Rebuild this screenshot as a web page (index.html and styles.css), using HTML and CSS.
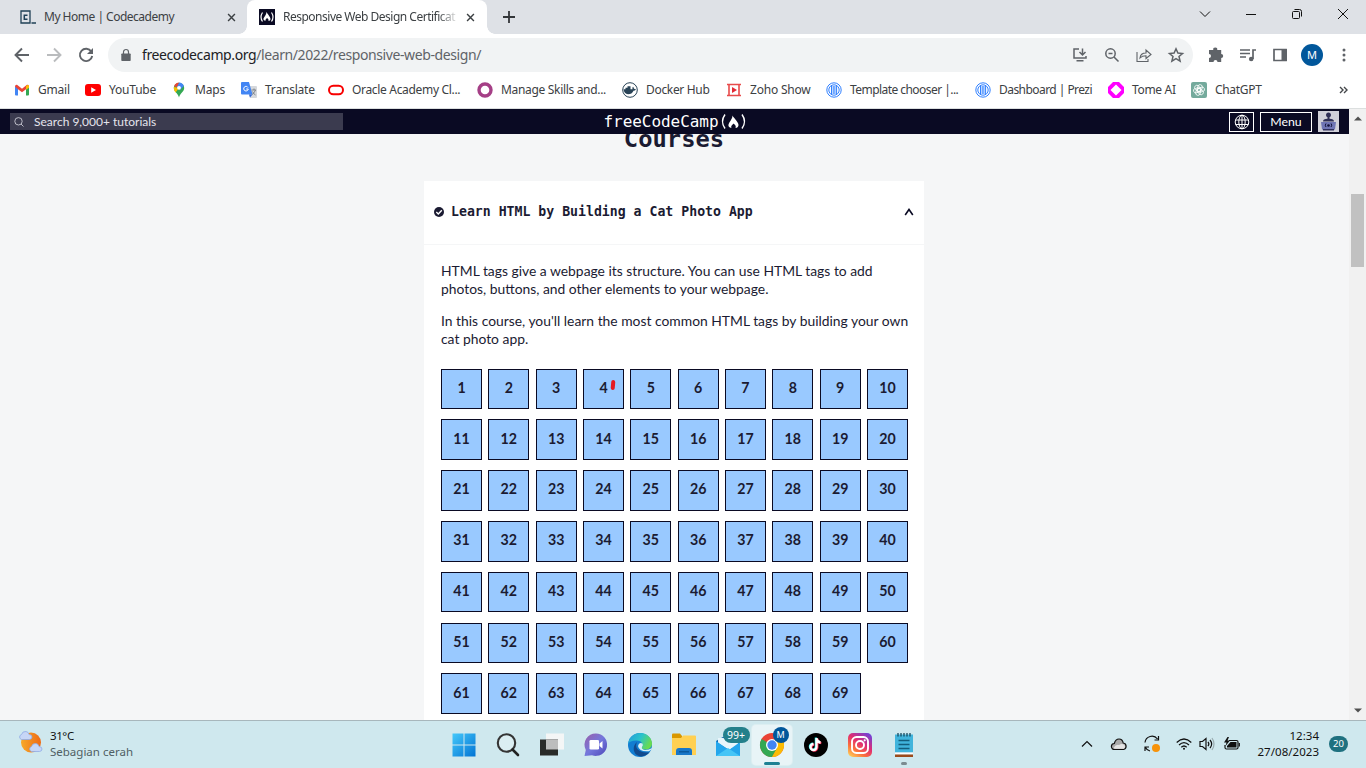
FILE: index.html
```html
<!DOCTYPE html>
<html lang="en">
<head>
<meta charset="utf-8">
<title>Responsive Web Design Certification</title>
<link rel="stylesheet" href="styles.css">
</head>
<body>
<div class="tabs">
  <div class="tab tab-idle">
    <svg class="fav" viewBox="0 0 16 16"><path d="M1 2h9v12H1z" fill="none" stroke="#1f4056" stroke-width="1.300"/><path d="M7.500 6.200H4.300v4h3.200M11.500 14H16" fill="none" stroke="#1f4056" stroke-width="1.500"/></svg>
    <span class="tab-title t-code">My Home | Codecademy</span>
    <svg class="x" viewBox="0 0 10 10"><path d="M1.200 1.200l7.600 7.600M8.800 1.200L1.200 8.800"/></svg>
  </div>
  <div class="tab tab-active">
    <svg class="fav" viewBox="0 0 16 16"><path fill="#0a0a23" d="M0 0h16v16H0z"/><path d="M3.500 3.500q-3 4.500 0 9M12.500 3.500q3 4.500 0 9" fill="none" stroke="#fff" stroke-width="1.200"/><path d="M7.500 3c1 2 4 5 4 7 0 1-1 2-2 2 .4-2-.8-2.500-1.500-3-.8 1.200-2 1.500-1.500 3-1.500-.3-2.300-1.500-2-2.500C5 8 7.500 6 7.500 3z" fill="#fff"/></svg>
    <span class="tab-title t-fcc">Responsive Web Design Certificat</span>
    <svg class="x" viewBox="0 0 10 10"><path d="M1.200 1.200l7.600 7.600M8.800 1.200L1.200 8.800"/></svg>
  </div>
  <svg class="plus" viewBox="0 0 12 12"><path d="M6 0v12M0 6h12" stroke="#333639" stroke-width="1.800"/></svg>
  <div class="window-controls">
    <svg viewBox="0 0 12 12"><path d="M1 3.500l5 5 5-5"/></svg>
    <svg viewBox="0 0 12 12"><path d="M1 6.500h10"/></svg>
    <svg viewBox="0 0 12 12"><rect x="1.500" y="3.500" width="7" height="7" rx="1"/><path d="M3.500 1.500h5q2 0 2 2v5"/></svg>
    <svg viewBox="0 0 12 12"><path d="M1 1l10 10M11 1L1 11"/></svg>
  </div>
</div>
<div class="toolbar">
  <svg class="nav-icon" viewBox="0 0 16 16"><path d="M15 8H2M8 1.500L1.500 8 8 14.500" stroke="#5f6368"/></svg>
  <svg class="nav-icon" viewBox="0 0 16 16"><path d="M1 8h13M8 1.500L14.500 8 8 14.500" stroke="#babcbe"/></svg>
  <svg class="nav-icon" viewBox="0 0 16 16"><path d="M13.300 4.500A6.200 6.200 0 1 0 14.200 9" stroke="#5f6368"/><path d="M15 1v6H9z" fill="#5f6368"/></svg>
  <div class="address">
    <svg class="lock" viewBox="0 0 10 12"><path fill="#5f6368" d="M1 4.500h8q.7 0 .7.700v6q0 .8-.8.800H1.100q-.8 0-.8-.8v-6q0-.7.700-.7z"/><path d="M2.500 5V3a2.500 2.500 0 0 1 5 0v2" fill="none" stroke="#5f6368" stroke-width="1.200"/></svg>
    <span class="url"><b>freecodecamp.org</b>/learn/2022/responsive-web-design/</span>
    <div class="address-icons">
      <svg viewBox="0 0 16 16"><path d="M7 2H2v9h12V9M4.500 13.800h7M10.500 1.500v6M7.500 5l3 3 3-3"/></svg>
      <svg viewBox="0 0 16 16"><circle cx="6.500" cy="6.500" r="4.700"/><path d="M10 10l4.500 4.500M4.500 6.500h4"/></svg>
      <svg viewBox="0 0 16 16"><path class="thin" d="M1 5v9.500h11V12M4 11q.5-5 6-5V3l5 4.500-5 4V8.800q-4 0-6 2.200z"/></svg>
      <svg viewBox="0 0 16 16"><path d="M8 1.800l1.900 4.300 4.600.4-3.500 3 1.100 4.600L8 11.700l-4.100 2.400L5 9.500 1.500 6.500l4.600-.4z"/></svg>
    </div>
  </div>
  <div class="tool-icons">
    <svg viewBox="0 0 16 16"><path fill="#5f6368" d="M1 3h4.300a2 2 0 1 1 3.900 0h4v4a2 2 0 1 1 0 4v4H9.500a2 2 0 0 0-4 0H1v-4a2 2 0 0 0 0-4z"/></svg>
    <svg viewBox="0 0 16 16"><path d="M0 3h10M0 6.500h10M0 10h6M13 12V3h3" fill="none" stroke="#5f6368" stroke-width="1.700"/><circle cx="11.200" cy="12" r="2.300" fill="#5f6368"/></svg>
    <svg viewBox="0 0 16 16"><path d="M2 2.500h12v11H2z" fill="none" stroke="#5f6368" stroke-width="1.700"/><path fill="#5f6368" d="M9.500 2H15v12H9.500z"/></svg>
    <span class="avatar">M</span>
    <svg viewBox="0 0 16 16"><g fill="#5f6368"><circle cx="8" cy="3" r="1.500"/><circle cx="8" cy="8" r="1.500"/><circle cx="8" cy="13" r="1.500"/></g></svg>
  </div>
</div>
<div class="bookmarks">
  <div class="bm w71"><svg viewBox="0 0 16 16"><path fill="#4285f4" d="M1 4l3 2v7.500H2q-1 0-1-1z"/><path fill="#34a853" d="M12 6l3-2v8.500q0 1-1 1h-2z"/><path fill="#ea4335" d="M1 4.500q0-2 2-1.700l5 4 5-4q2-.3 2 1.700l-3 2.800-4 3-4-3z"/><path fill="#fbbc04" d="M12 4l2-1.300q1 .3 1 1.500v1.500l-3 2z"/></svg><span>Gmail</span></div>
  <div class="bm w86"><svg viewBox="0 0 16 16"><rect y="2" width="16" height="12" rx="3" fill="red"/><path fill="#fff" d="M6.200 5.200v5.600L11 8z"/></svg><span>YouTube</span></div>
  <div class="bm w70"><svg viewBox="0 0 16 16"><path fill="#34a853" d="M2.800 6a5.200 5.200 0 0 1 10.400 0C13.200 10 9 11 8 15.500 7 11 2.800 10 2.800 6z"/><path fill="#4285f4" d="M8 .5A5.200 5.200 0 0 1 12.800 4L9 8 5.500 5z"/><path fill="#ea4335" d="M4 2.500A5 5 0 0 1 8 .5L6 5 3 4.500z"/><path fill="#fbbc04" d="M2.800 5L8 6l-3.500 4.500Q2.500 8 2.800 5z"/><circle cx="8" cy="5.800" r="1.900" fill="#fff"/></svg><span>Maps</span></div>
  <div class="bm w87"><svg viewBox="0 0 16 16"><path fill="#d5d8dc" d="M6 4h9q1 0 1 1v10q0 1-1 1H9z"/><path fill="#4285f4" d="M1 0h7l3.500 12.500H1q-1 0-1-1V1q0-1 1-1z"/><path fill="#3367d6" d="M8 12.500h3.500L9 15.500z"/><path d="M7 5.500a2.300 2.300 0 1 0 .3 1.500H5.200" stroke="#fff" fill="none"/><path d="M10.500 8H15M13 6.500V8M14.500 8q-1 3-3.500 4.500M11.500 9.500q1 2.500 3 3.500" stroke="#70757a" fill="none" stroke-width=".8"/></svg><span>Translate</span></div>
  <div class="bm w149"><svg viewBox="0 0 16 16"><rect x="1" y="3.700" width="14" height="8.600" rx="4.300" fill="none" stroke="#f80000" stroke-width="2"/></svg><span class="tight">Oracle Academy Cl...</span></div>
  <div class="bm w145"><svg viewBox="0 0 16 16"><circle cx="8" cy="8" r="6" fill="none" stroke="#a53f86" stroke-width="3.400"/></svg><span class="tight">Manage Skills and...</span></div>
  <div class="bm w104"><svg viewBox="0 0 16 16"><circle cx="8" cy="8" r="7.300" fill="#fff" stroke="#294356"/><path fill="#294356" d="M1.500 7.300h2V5.800h2V4.300h3v3h2q-.5-1.800.5-2.500 1 .8 1 2 1 0 2 .5-.8 1.500-2.500 1.500Q10 12.300 6 12.300 2 12 1.500 7.300z"/></svg><span class="tight">Docker Hub</span></div>
  <div class="bm w100"><svg viewBox="0 0 16 16"><path d="M1 2.500h14M1 13.500h14M3 3v10M13 3v10" stroke="#e84b4b" stroke-width="1.600" fill="none"/><path fill="#e32a35" d="M6 5v6l5-3z"/></svg><span>Zoho Show</span></div>
  <div class="bm w149"><svg viewBox="0 0 16 16"><g fill="none" stroke="#3181ff"><circle cx="8" cy="8" r="7.200"/><circle cx="8" cy="8" r="5.200"/><path d="M5.500 4v8M7.200 4v8M8.900 4v8M10.600 4v8"/></g></svg><span class="tighter">Template chooser |...</span></div>
  <div class="bm w133"><svg viewBox="0 0 16 16"><g fill="none" stroke="#3181ff"><circle cx="8" cy="8" r="7.200"/><circle cx="8" cy="8" r="5.200"/><path d="M5.500 4v8M7.200 4v8M8.900 4v8M10.600 4v8"/></g></svg><span class="tighter">Dashboard | Prezi</span></div>
  <div class="bm w83"><svg viewBox="0 0 16 16"><path fill="#f0f" fill-rule="evenodd" d="M5 0h6l5 5v6l-5 5H5l-5-5V5zM8 2.500L2.500 8 8 13.500 13.500 8z"/></svg><span class="tight">Tome AI</span></div>
  <div class="bm"><svg viewBox="0 0 16 16"><rect width="16" height="16" rx="2" fill="#74aa9c"/><g fill="none" stroke="#fff" stroke-width=".8"><rect x="6" y="2.500" width="4.500" height="7" rx="2.200" transform="rotate(15 8 8)"/><rect x="6" y="2.500" width="4.500" height="7" rx="2.200" transform="rotate(75 8 8)"/><rect x="6" y="2.500" width="4.500" height="7" rx="2.200" transform="rotate(135 8 8)"/><rect x="6" y="2.500" width="4.500" height="7" rx="2.200" transform="rotate(195 8 8)"/><rect x="6" y="2.500" width="4.500" height="7" rx="2.200" transform="rotate(255 8 8)"/><rect x="6" y="2.500" width="4.500" height="7" rx="2.200" transform="rotate(315 8 8)"/></g></svg><span class="tight">ChatGPT</span></div>
  <svg class="more" viewBox="0 0 9 8"><path d="M1 1l3 3-3 3M5 1l3 3-3 3" fill="none" stroke="#44474a" stroke-width="1.400"/></svg>
</div>
<div class="viewport">
  <div class="page">
    <header class="site-header">
      <div class="search"><svg viewBox="0 0 10 10"><circle cx="4.500" cy="4.300" r="3.700"/><path d="M7 7l2.500 2.500"/></svg><span>Search 9,000+ tutorials</span></div>
      <div class="logo"><span>freeCodeCamp</span><svg viewBox="0 0 26 18"><path d="M5 1.500q-5 7 0 14M22 1.500q5 7 0 14" fill="none" stroke="#fff" stroke-width="1.400"/><path d="M12.500 2.500c1.500 3 6 6.500 6 9.500 0 1.500-1 2.800-3 3 1-2.500-1-3.500-2-4.500-1 1.500-3 2.500-2 4.500-2.500-.5-3.500-2-3-3.500C9.500 8.500 12.500 6 12.500 2.500z" fill="#fff"/></svg></div>
      <div class="header-actions">
        <span class="globe"><svg viewBox="0 0 16 16"><circle cx="8" cy="8" r="6.800"/><ellipse cx="8" cy="8" rx="3.200" ry="6.800"/><path d="M8 1v14M1.500 6h13M1.500 10.500h13"/></svg></span>
        <span class="menu">Menu</span>
        <svg class="camper" viewBox="0 0 21 21"><path fill="#d0d0d9" d="M0 0h21v21H0z"/><path fill="#2e2e55" d="M10.500 1.500a2.500 2.500 0 0 1 1 4.800v1.500q4.500 0 4.500 2.700H5q0-2.700 4.500-2.700V6.300a2.500 2.500 0 0 1 1-4.800z"/><path fill="#6f75b5" d="M3 11h15l-1 7.500H4z"/><path fill="#30305c" d="M5 18h11v1.500H5z"/><path d="M8 12.500q-1.500 1.700 0 3.500M13 12.500q1.500 1.700 0 3.500" fill="none" stroke="#111138"/><circle cx="10.500" cy="14.500" r="1.300" fill="#111138"/></svg>
      </div>
    </header>
    <main>
      <h2>Courses</h2>
      <section class="card">
        <div class="card-head">
          <svg class="check" viewBox="0 0 10 10"><circle cx="5" cy="5" r="5" fill="#1b1b32"/><path d="M2.300 5l2 2 3.500-3.700" fill="none" stroke="#fff" stroke-width="1.400"/></svg>
          <h3>Learn HTML by Building a Cat Photo App</h3>
          <svg class="caret" viewBox="0 0 10 8"><path d="M1.200 7L5 1.500 8.800 7" fill="none" stroke="#0a0a23" stroke-width="1.600"/></svg>
        </div>
        <div class="card-body">
          <p>HTML tags give a webpage its structure. You can use HTML tags to add<br>photos, buttons, and other elements to your webpage.</p>
          <p>In this course, you'll learn the most common HTML tags by building your own<br>cat photo app.</p>
          <div class="steps" id="steps"></div>
        </div>
      </section>
    </main>
  </div>
  <div class="scrollbar">
    <svg viewBox="0 0 8 5"><path fill="#505050" d="M0 4.500h8L4 .5z"/></svg>
    <div class="thumb"></div>
    <svg viewBox="0 0 8 5"><path fill="#505050" d="M0 .5h8L4 4.500z"/></svg>
  </div>
</div>
<footer class="taskbar">
  <div class="weather">
    <svg viewBox="0 0 26 24"><defs><linearGradient id="sun"><stop stop-color="#f7a928"/><stop offset="1" stop-color="#ee6a16"/></linearGradient></defs><circle cx="13" cy="12.500" r="10" fill="url(#sun)"/><g fill="#c7d6f6" stroke="#8fabe4" stroke-width=".8"><path d="M3.500 9.500a2.600 2.600 0 0 1 0-5q1-3.500 4.500-3 2.500.3 3 3 3 .2 3 2.500t-2.500 2.500z"/><path d="M13.500 21.500a2.600 2.600 0 0 1 0-5q1-3.500 4.500-3 2.500.3 3 3 3 .2 3 2.500t-2.500 2.500z"/></g></svg>
    <div><div class="temp">31°C</div><div class="sky">Sebagian cerah</div></div>
  </div>
  <div class="apps">
    <div class="app"><svg viewBox="0 0 24 24"><defs><linearGradient id="win" x2="1" y2="1"><stop stop-color="#45c8fa"/><stop offset="1" stop-color="#0274d4"/></linearGradient></defs><path fill="url(#win)" d="M.5.500h11v11H.5zM12.500.500h11v11h-11zM.5 12.500h11v11H.5zM12.500 12.500h11v11h-11z"/></svg></div>
    <div class="app"><svg viewBox="0 0 24 24"><circle cx="10.500" cy="10" r="8.700" fill="#ffffff40" stroke="#343434" stroke-width="2.100"/><path d="M16.500 16.500l5.500 5.500" stroke="#222" stroke-width="2.600" stroke-linecap="round"/></svg></div>
    <div class="app"><svg viewBox="0 0 24 24"><path fill="#f4f6f6" d="M6 .5h18v16H6z"/><path fill="#292b29" d="M0 6.500h18v16H0z"/><path fill="#bcbdbd" d="M6 6.500h12v10H6z"/></svg></div>
    <div class="app"><svg viewBox="0 0 24 24"><defs><linearGradient id="chat" x2="1" y2="1"><stop stop-color="#9a5fa9"/><stop offset=".5" stop-color="#7478dc"/><stop offset="1" stop-color="#4e48b9"/></linearGradient></defs><path fill="url(#chat)" d="M12 .5a11.200 11.200 0 1 1-4 21.700L.5 23l1.300-6A11.200 11.200 0 0 1 12 .5z"/><rect x="5.500" y="7" width="9.500" height="9.500" rx="1.300" fill="#fff"/><path fill="#fff" d="M15.500 10.500l3-2.500v7.500l-3-2.500z"/></svg></div>
    <div class="app"><svg viewBox="0 0 24 24"><defs><linearGradient id="edge" x2="1" y2=".4"><stop stop-color="#239adb"/><stop offset=".55" stop-color="#2bc3cb"/><stop offset="1" stop-color="#67db52"/></linearGradient></defs><circle cx="12" cy="12" r="12" fill="#127dd1"/><path fill="url(#edge)" d="M0 11C1 4 6 0 12 0c7 0 12 5 12 10.500 0 4-3 6-6.500 6-3 0-4.500-1-3.500-2.500C16 10 12 7 8 7.500 4 7.500 1 9 0 11z"/><path fill="#114a8d" d="M9 9c-3 6 2 11.500 12.500 10.300C17 25 8 25 6 18c-1-4 1-7.500 3-9z"/><path fill="#d7f1f5" d="M10 13q1-4.500 4.500-2.500 1 1.500-.5 3.500-1 2 3 3 4 0 7-2-.5 2-3 3.200Q11 19 10 13z"/></svg></div>
    <div class="app"><svg viewBox="0 0 24 24"><path fill="#d99700" d="M0 1.500q0-1 1-1h7l2 2.500v4H0z"/><path fill="#ffd052" d="M0 5h9l2-2.500h12q1 0 1 1V22H0z"/><path fill="#1877c8" d="M4 22v-4q0-3 3-3h10q3 0 3 3v4z"/><path fill="#0a599d" d="M7 18h10v1.500H7z"/></svg></div>
    <div class="app"><svg viewBox="0 0 24 24"><path fill="#1266b4" d="M0 8l12-7 12 7v15H0z"/><path fill="#e8f5fb" d="M2 5h20v7l-9 5L2 10z"/><path fill="#24a6ec" d="M0 8l13 9L24 9v14H0z"/><path fill="#45c5f6" d="M0 23l12-8 12 8z"/></svg><span class="badge">99+</span></div>
    <div class="app current"><svg viewBox="0 0 24 24"><circle cx="12" cy="12" r="12" fill="#ea4335"/><path fill="#34a853" d="M1.600 6A12 12 0 0 0 12 24l5.500-9L12 12z"/><path fill="#fbbc04" d="M22.400 6A12 12 0 0 1 12 24l5-9-2-8.500z"/><circle cx="12" cy="12" r="6" fill="#fff"/><circle cx="12" cy="12" r="4.700" fill="#4285f4"/></svg><span class="profile">M</span></div>
    <div class="app"><svg viewBox="0 0 24 24"><circle cx="12" cy="12" r="12"/><g fill="none" stroke-width="2.300"><path d="M12.500 5v9a3 3 0 1 1-3-3M12.500 5.500q.5 3.500 4 4" stroke="#25f4ee" transform="translate(-.6 -.4)"/><path d="M12.500 5v9a3 3 0 1 1-3-3M12.500 5.500q.5 3.500 4 4" stroke="#fe2c55" transform="translate(.8 .6)"/><path d="M12.500 5v9a3 3 0 1 1-3-3M12.500 5.500q.5 3.500 4 4" stroke="#fff"/></g></svg></div>
    <div class="app"><svg viewBox="0 0 24 24"><defs><linearGradient id="ig" x1=".1" y1="1" x2=".8" y2="0"><stop stop-color="#ffd05a"/><stop offset=".3" stop-color="#fb713d"/><stop offset=".6" stop-color="#e02c72"/><stop offset="1" stop-color="#7540d5"/></linearGradient></defs><rect width="24" height="24" rx="5" fill="url(#ig)"/><g fill="none" stroke="#fff" stroke-width="1.900"><rect x="4" y="4" width="16" height="16" rx="4.500"/><circle cx="12" cy="12" r="4"/></g><circle cx="16.700" cy="7.300" r="1.100" fill="#fff"/></svg></div>
    <div class="app running"><svg viewBox="0 0 24 24"><path fill="#41b4dc" d="M3 1.500h18v18H3z"/><path fill="#fff" d="M3 19.500h18v2H3z"/><path fill="#9b4b1c" d="M3 21.500h18V24H3z"/><path d="M6 0v3.500M9 0v3.500M12 0v3.500M15 0v3.500M18 0v3.500" stroke="#174a60" stroke-width="1.300"/><path d="M6.500 7.500h11M6.500 11.500h11M6.500 15.500h11" stroke="#135e7d" stroke-width="1.600"/></svg></div>
  </div>
  <div class="tray">
    <svg class="up" viewBox="0 0 12 8"><path d="M1 6.500l5-5 5 5"/></svg>
    <svg class="cloud" viewBox="0 0 16 12"><path fill="#aaa" d="M3.500 11.500a3 3 0 0 1-.2-6Q4.500 1 8 1t4.200 4a3.300 3.300 0 0 1 .3 6.500z"/><path fill="#e4e4e4" stroke="none" d="M2.500 10Q5 6 8 7q3-2 5.500 0 1.500 2-.5 3.800H4z"/></svg>
    <svg class="sync" viewBox="0 0 18 18"><path d="M2 7.500A7 7 0 0 1 14.500 4M15.500 1v4h-4M2 16v-4h4M2.500 12.500Q4 15.500 7 16"/><circle cx="13" cy="13" r="4" fill="#f7930a" stroke="none"/></svg>
    <svg class="wifi" viewBox="0 0 16 12"><path d="M.7 4.500q7.300-7 14.600 0M3 7q5-4.800 10 0M5.300 9.300q2.700-2.600 5.400 0"/><circle cx="8" cy="10.700" r="1" fill="#111" stroke="none"/></svg>
    <svg class="sound" viewBox="0 0 16 14"><path d="M1 4.500h2.500L7 1.500v11L3.500 9.500H1zM9 4.800q1.700 2.200 0 4.400M11 3q3.300 4 0 8"/><path d="M13 1q4 6 0 12" stroke="#9aabb0"/></svg>
    <svg class="battery" viewBox="0 0 16 13"><path d="M5 3.500h7.500q1.500 0 1.500 1.500v5.500q0 1.500-1.500 1.500H2.500Q1 12 1 10.500V8"/><path fill="#111" stroke="none" d="M6.500 5h6v5.500H3V9z"/><path d="M15.300 6v3.500"/><path fill="#111" stroke="none" d="M3.500 0L0 5.500h2.500L1.500 9 6 3.500H3.500L5 0z"/></svg>
    <div class="clock"><div>12:34</div><div>27/08/2023</div></div>
    <span class="notif">20</span>
  </div>
</footer>
<script src="script.js"></script>
</body>
</html>
```
FILE: styles.css
```css
* { box-sizing: border-box; }
body { margin: 0; width: 1366px; height: 768px; overflow: hidden; display: flex; flex-direction: column; font-family: "Noto Sans", "Open Sans", sans-serif; font-size: 12px; color: #3c4043; background: #fff; }
svg { display: block; flex: none; overflow: visible; }
span { white-space: nowrap; }

.tabs { height: 34px; background: #dee1e6; display: flex; align-items: center; flex: none; }
.tab { height: 34px; display: flex; align-items: center; }
.tab-idle { width: 247px; padding-left: 20px; }
.tab-active { width: 240px; padding-left: 12px; background: #fff; border-radius: 8px 8px 0 0; position: relative; }
.tab-active::before, .tab-active::after { content: ""; position: absolute; bottom: 0; width: 8px; height: 8px; }
.tab-active::before { left: -8px; background: radial-gradient(circle at 0 0, #dee1e6 7.5px, #fff 8px); }
.tab-active::after { right: -8px; background: radial-gradient(circle at 100% 0, #dee1e6 7.5px, #fff 8px); }
.fav { width: 16px; height: 16px; margin-right: 8px; }
.tab-title { line-height: 20px; }
.t-code { width: 183px; letter-spacing: -.5px; }
.t-fcc { width: 176px; margin-right: 7px; letter-spacing: -.5px; -webkit-mask-image: linear-gradient(90deg, #000 88%, transparent); mask-image: linear-gradient(90deg, #000 88%, transparent); }
.x { width: 9px; height: 9px; fill: none; stroke: #3c4043; stroke-width: 1.6; }
.plus { width: 12px; height: 12px; margin-left: 16px; }
.window-controls { margin-left: auto; display: flex; gap: 34px; padding: 0 17px 6px 0; }
.window-controls svg { width: 12px; height: 12px; fill: none; stroke: #111; stroke-width: 1; }

.toolbar { height: 42px; flex: none; display: flex; align-items: center; padding-left: 14px; }
.nav-icon { width: 16px; height: 16px; margin-right: 16px; fill: none; stroke-width: 1.9; }
.address { width: 1085px; height: 34px; margin-left: -2px; background: #f1f3f4; border-radius: 17px; display: flex; align-items: center; padding: 0 9px 0 13px; }
.lock { width: 10px; height: 12px; margin-right: 11px; }
.url { font-size: 14px; color: #5f6368; letter-spacing: -.4px; padding-bottom: 1px; }
.url b { font-weight: 400; color: #202124; }
.address-icons { margin-left: auto; display: flex; gap: 16px; }
.address-icons svg { width: 16px; height: 16px; fill: none; stroke: #5f6368; stroke-width: 1.5; }
.address-icons .thin { stroke-width: 1.1; }
.tool-icons { display: flex; align-items: center; margin-left: 15px; gap: 16px; }
.tool-icons svg { width: 16px; height: 16px; }
.avatar { width: 22px; height: 22px; margin: 0 -3px; border-radius: 50%; background: #01579b; color: #fff; text-align: center; line-height: 22px; font-size: 11px; }

.bookmarks { height: 33px; flex: none; display: flex; align-items: center; padding: 0 18px 5px 14px; border-bottom: 1px solid #dcdfdf; }
.bm { display: flex; align-items: center; gap: 8px; flex: none; }
.bm svg { width: 16px; height: 16px; }
.bm span { letter-spacing: -.2px; }
.bm .tight { letter-spacing: -.32px; }
.bm .tighter { letter-spacing: -.55px; }
.w71 { width: 71px; } .w86 { width: 86px; } .w70 { width: 70px; } .w87 { width: 87px; }
.w149 { width: 149px; } .w145 { width: 145px; } .w104 { width: 104px; } .w100 { width: 100px; }
.w133 { width: 133px; } .w83 { width: 83px; }
.more { width: 9px; height: 8px; margin-left: auto; }

.viewport { height: 611px; flex: none; display: flex; overflow: hidden; }
.page { width: 1349px; background: #f5f6f7; font-family: Lato, sans-serif; color: #1b1b32; }
.site-header { height: 25px; background: #0a0a23; display: grid; grid-template-columns: 1fr auto 1fr; align-items: center; padding: 0 10px; position: relative; z-index: 1; }
.search { width: 333px; height: 17px; background: #3b3b4f; color: #e4e4ec; display: flex; align-items: center; padding-left: 4px; gap: 10px; font-size: 12px; }
.search svg { width: 10px; height: 10px; fill: none; stroke: #c8c8d2; stroke-width: .9; }
.logo { display: flex; align-items: center; color: #fff; font-family: "DejaVu Sans Mono", monospace; font-size: 16px; letter-spacing: -.05px; line-height: 20px; font-weight: 200; }
.logo svg { width: 26px; height: 18px; margin-left: 1px; }
.header-actions { display: flex; justify-content: flex-end; align-items: center; gap: 6px; }
.globe, .menu { height: 20px; border: 1px solid #fff; }
.globe { width: 25px; padding: 1px 4px; }
.globe svg { width: 16px; height: 16px; fill: none; stroke: #fff; stroke-width: 1; }
.menu { width: 52px; color: #fff; font-size: 12.3px; text-align: center; line-height: 18px; }
.camper { width: 21px; height: 21px; }
main { width: 500px; margin-left: 424px; }
h2 { margin: -11px 0 27px; height: 31px; font: 700 23.8px/32px "DejaVu Sans Mono", monospace; text-align: center; }
.card { background: #fff; height: 540px; }
.card-head { height: 64px; border-bottom: 1px solid #f5f6f7; display: flex; align-items: center; padding: 0 10px 2px; }
.check { width: 10px; height: 10px; margin-right: 7px; }
h3 { margin: 0; font: 700 13.2px/18px "DejaVu Sans Mono", monospace; white-space: nowrap; padding-top: 1px; }
.caret { width: 10px; height: 8px; margin-left: auto; }
.card-body { padding: 17px 16px 0 17px; }
p { margin: 0 0 14px; font-size: 13.87px; line-height: 18px; white-space: nowrap; }
.steps { margin-top: 20.6px; display: grid; grid-template-columns: repeat(10, 1fr); column-gap: 6.3px; row-gap: 10.2px; grid-auto-rows: 40.6px; }
.step { display: flex; align-items: center; justify-content: center; background: #99c9ff; border: 1px solid #0a0a23; font-size: 14.2px; font-weight: 700; padding-bottom: 3px; position: relative; }
.pen { position: absolute; left: 27px; top: 10.500px; width: 4px; height: 10px; border-radius: 2px; background: #e51b23; transform: rotate(5deg); }
.scrollbar { width: 17px; background: #f1f1f1; display: flex; flex-direction: column; align-items: center; padding: 7px 0; }
.scrollbar svg { width: 8px; height: 5px; }
.thumb { width: 13px; height: 73px; margin: 73px 0 auto; background: #c1c1c1; }

.taskbar { height: 48px; flex: none; background: #cfe8ee; border-top: 1px solid #a8b7bc; display: grid; grid-template-columns: 442px 490px 1fr; align-items: center; color: #111; }
.weather { display: flex; gap: 6px; padding: 0 0 2px 18px; align-items: center; letter-spacing: -.4px; line-height: 16px; font-size: 11.5px; }
.weather svg { width: 26px; height: 24px; margin-bottom: 3px; }
.sky { color: #4f5f64; letter-spacing: 0; }
.apps { display: flex; gap: 4px; padding-left: 1.5px; }
.app { width: 40px; height: 40px; display: flex; align-items: center; justify-content: center; position: relative; border-radius: 4px; }
.app svg { width: 24px; height: 24px; }
.badge { position: absolute; left: 15px; top: 2px; width: 27px; height: 16px; border-radius: 8px; background: #24808b; color: #fff; text-align: center; font-size: 10.5px; line-height: 16px; }
.current { background: #e8f4f7; box-shadow: 0 0 0 1px #dceef1; }
.current::after { content: ""; position: absolute; bottom: 0; width: 16px; height: 3px; border-radius: 2px; background: #1d8193; }
.running::after { content: ""; position: absolute; bottom: 0; width: 6px; height: 3px; border-radius: 2px; background: #7b8b90; }
.profile { position: absolute; right: 3px; top: 2px; width: 16px; height: 16px; border-radius: 50%; background: #01579b; color: #fff; text-align: center; line-height: 16px; font-size: 9px; }
.tray { display: flex; align-items: center; justify-content: flex-end; padding: 0 18px 2px 0; }
.tray svg { fill: none; stroke: #111; stroke-width: 1.2; }
.up { width: 12px; height: 8px; margin-right: 18px; }
.cloud { width: 16px; height: 12px; margin-right: 16px; }
.sync { width: 18px; height: 18px; margin-right: 15px; }
.wifi { width: 16px; height: 12px; margin-right: 7px; }
.sound { width: 16px; height: 14px; margin-right: 9px; }
.battery { width: 16px; height: 13px; }
.clock { width: 79px; text-align: right; font-size: 11.5px; line-height: 16px; letter-spacing: .03px; margin-right: 10px; }
.notif { width: 19px; height: 16px; border-radius: 8px; background: #1f7180; color: #fff; text-align: center; line-height: 16px; font-size: 9.5px; }
```
FILE: script.js
```js
const steps = document.getElementById("steps");
for (let n = 1; n <= 69; n++) {
  const step = document.createElement("div");
  step.className = "step";
  step.textContent = n;
  if (n === 4) {
    const pen = document.createElement("i");
    pen.className = "pen";
    step.append(pen);
  }
  steps.append(step);
}
```
